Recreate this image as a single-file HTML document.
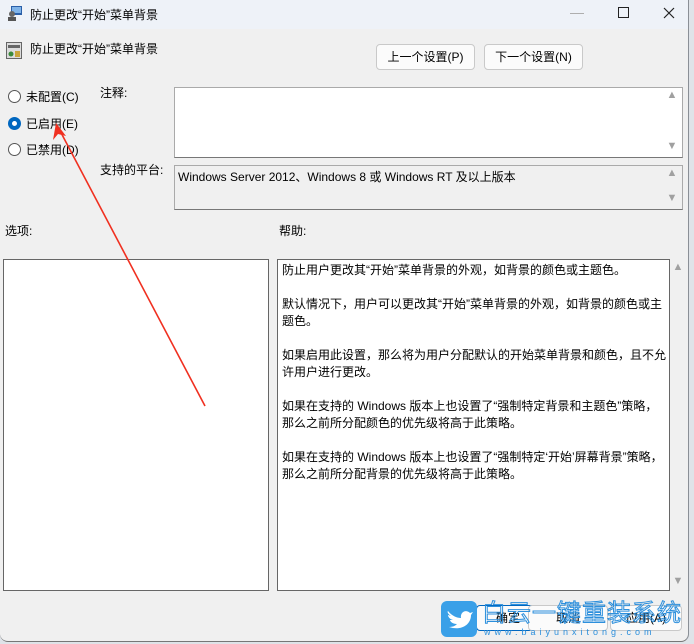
<!DOCTYPE html>
<html><head><meta charset="utf-8"><style>
*{margin:0;padding:0;box-sizing:border-box}
body{width:694px;height:644px;background:#dfe3e8;position:relative;overflow:hidden;font-family:"Liberation Sans","Microsoft YaHei","Noto Sans CJK SC",sans-serif;font-size:12px;color:#000}
.win{position:absolute;left:0;top:0;width:689px;height:642px;background:#f0f0f0;border-radius:0 0 8px 8px;border-right:1px solid #8a8f96;border-bottom:1px solid #777}
.title{position:absolute;left:0;top:0;width:688px;height:29px;background:#eef2f8}
.abs{position:absolute;white-space:nowrap}
.btn{position:absolute;height:26px;border:1px solid #c9c9c9;border-radius:4px;background:#fbfbfb;text-align:center;line-height:24px;font-size:12px}
.box{position:absolute;border:1px solid #aaa;border-bottom-color:#777}
.sb{position:absolute;width:16px;color:#a0a0a0;font-size:11px;text-align:center}
.radio{position:absolute;left:8px;width:13px;height:13px;border:1px solid #555;border-radius:50%;background:#fff}
.help p{margin-bottom:17px}
</style></head><body>
<div class="win">
<div class="title"></div>
<svg class="abs" style="left:8px;top:6px" width="14" height="15"><rect x="3" y="0" width="11" height="9" fill="#2a5fa8"/><rect x="4" y="1" width="9" height="6" fill="#7fb3e8"/><circle cx="4" cy="8" r="3" fill="#666"/><rect x="0" y="11" width="8" height="4" fill="#555"/></svg>
<div class="abs" style="left:30px;top:6px;font-size:12px">防止更改“开始”菜单背景</div>
<div class="abs" style="left:570px;top:4px;color:#aaa;font-size:14px">—</div>
<div class="abs" style="left:618px;top:7px;width:11px;height:11px;border:1px solid #222"></div>
<svg class="abs" style="left:663px;top:7px" width="12" height="12"><path d="M1 1L11 11M11 1L1 11" stroke="#222" stroke-width="1.2"/></svg>
<svg class="abs" style="left:6px;top:42px" width="16" height="17"><rect x="0.5" y="0.5" width="15" height="16" fill="#dcdcdc" stroke="#666"/><rect x="2" y="3" width="12" height="3" fill="#666"/><circle cx="5" cy="12" r="2.5" fill="#3a8a3a"/><rect x="9" y="9" width="5" height="6" fill="#c9a43a"/></svg>
<div class="abs" style="left:30px;top:40px">防止更改“开始”菜单背景</div>
<div class="btn" style="left:376px;top:44px;width:99px">上一个设置(P)</div>
<div class="btn" style="left:484px;top:44px;width:99px">下一个设置(N)</div>
<div class="radio" style="top:90px"></div><div class="abs" style="left:26px;top:88px">未配置(C)</div>
<div class="radio" style="top:117px;border-color:#0067c0;border-width:4px"></div><div class="abs" style="left:26px;top:115px">已启用(E)</div>
<div class="radio" style="top:143px"></div><div class="abs" style="left:26px;top:141px">已禁用(D)</div>
<div class="abs" style="left:100px;top:84px">注释:</div>
<div class="box" style="left:174px;top:87px;width:509px;height:71px;background:#fff"></div>
<div class="sb" style="left:664px;top:89px">▲</div><div class="sb" style="left:664px;top:140px">▼</div>
<div class="abs" style="left:100px;top:161px">支持的平台:</div>
<div class="box" style="left:174px;top:165px;width:509px;height:45px;background:#f0f0f0"></div>
<div class="abs" style="left:178px;top:168px">Windows Server 2012、Windows 8 或 Windows RT 及以上版本</div>
<div class="sb" style="left:664px;top:167px">▲</div><div class="sb" style="left:664px;top:192px">▼</div>
<div class="abs" style="left:5px;top:222px">选项:</div>
<div class="abs" style="left:279px;top:222px">帮助:</div>
<div class="box" style="left:3px;top:259px;width:266px;height:332px;background:#fff;border-color:#666"></div>
<div class="box" style="left:277px;top:259px;width:393px;height:332px;background:#fff;border-color:#666"></div>
<div class="help abs" style="left:282px;top:262px;line-height:17px;white-space:normal;width:386px">
<p>防止用户更改其“开始”菜单背景的外观，如背景的颜色或主题色。</p>
<p>默认情况下，用户可以更改其“开始”菜单背景的外观，如背景的颜色或主题色。</p>
<p>如果启用此设置，那么将为用户分配默认的开始菜单背景和颜色，且不允许用户进行更改。</p>
<p>如果在支持的 Windows 版本上也设置了“强制特定背景和主题色”策略，那么之前所分配颜色的优先级将高于此策略。</p>
<p>如果在支持的 Windows 版本上也设置了“强制特定‘开始’屏幕背景”策略，那么之前所分配背景的优先级将高于此策略。</p>
</div>
<div class="sb" style="left:670px;top:261px">▲</div><div class="sb" style="left:670px;top:575px">▼</div>
<div class="btn" style="left:476px;top:605px;width:64px;border-color:#0067c0">确定</div>
<div class="btn" style="left:528px;top:605px;width:80px">取消</div>
<div class="btn" style="left:610px;top:605px;width:72px">应用(A)</div>
</div>
<svg class="abs" style="left:0;top:0" width="694" height="644"><path d="M205 406L58 127" stroke="#f03020" stroke-width="1.6"/><path d="M56 123L66 136L58 134L53 140Z" fill="#f03020"/></svg>
<div class="abs" style="left:441px;top:601px;width:36px;height:36px;background:#3aa0e8;border-radius:6px"></div>
<svg class="abs" style="left:446px;top:607px" width="27" height="24"><path d="M2 4C6 9 11 11 15 11C14 5 20 2 24 6L27 5L25 8C25 18 15 24 3 20C8 20 10 18 11 17C6 17 4 14 4 13L7 13C3 12 2 9 2 8L5 9C2 7 1 5 2 4Z" fill="#fff"/></svg>
<div class="abs" style="left:482px;top:601px;font-size:24px;line-height:26px;color:transparent;-webkit-text-stroke:1px #2c8fdc;letter-spacing:1px">白云一键重装系统</div>
<div class="abs" style="left:484px;top:627px;font-size:9px;color:#2c8fdc;letter-spacing:4px">www.baiyunxitong.com</div>
</body></html>
